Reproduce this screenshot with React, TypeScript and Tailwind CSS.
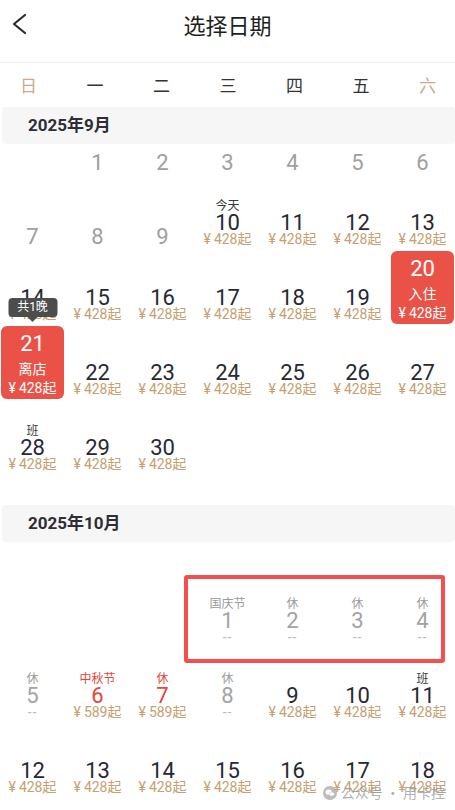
import React from "react";

type Day = {
  d: number;
  label?: string;
  tone?: "dark" | "gray" | "red";
  price?: string;
  past?: boolean;
  dash?: boolean;
  sel?: "in" | "out";
};

const p = (d: number, extra: Partial<Day> = {}): Day => ({ d, price: "428", ...extra });

const septWeeks: (Day | null)[][] = [
  [null, 1, 2, 3, 4, 5, 6].map((d) => (d ? { d, past: true } : null)),
  [
    { d: 7, past: true },
    { d: 8, past: true },
    { d: 9, past: true },
    p(10, { label: "今天", tone: "dark" }),
    p(11),
    p(12),
    p(13),
  ],
  [p(14), p(15), p(16), p(17), p(18), p(19), p(20, { sel: "in" })],
  [p(21, { sel: "out" }), p(22), p(23), p(24), p(25), p(26), p(27)],
  [p(28, { label: "班", tone: "dark" }), p(29), p(30), null, null, null, null],
];

const octWeeks: (Day | null)[][] = [
  [
    null,
    null,
    null,
    { d: 1, label: "国庆节", tone: "gray", dash: true },
    { d: 2, label: "休", tone: "gray", dash: true },
    { d: 3, label: "休", tone: "gray", dash: true },
    { d: 4, label: "休", tone: "gray", dash: true },
  ],
  [
    { d: 5, label: "休", tone: "gray", dash: true },
    { d: 6, label: "中秋节", tone: "red", price: "589" },
    { d: 7, label: "休", tone: "red", price: "589" },
    { d: 8, label: "休", tone: "gray", dash: true },
    p(9),
    p(10),
    p(11, { label: "班", tone: "dark" }),
  ],
  [p(12), p(13), p(14), p(15), p(16), p(17), p(18)],
];

const Price = ({ v, white }: { v: string; white?: boolean }) => (
  <div className={`h-[15px] leading-[15px] text-[14px] whitespace-nowrap ${white ? "text-white" : "text-[#c6a071]"}`}>
    <span className="mr-[3px]">¥</span>
    {v}起
  </div>
);

const Cell = ({ day, short }: { day: Day | null; short?: boolean }) => {
  if (!day) return <div className={short ? "h-[32px]" : "h-[75px]"} />;

  if (day.past) {
    return (
      <div className={`flex flex-col items-center justify-end ${short ? "h-[32px] pb-[2px]" : "h-[75px] pb-[3px]"}`}>
        <div className="h-[22px] leading-[22px] text-[22px] text-[#a0a0a0]">{day.d}</div>
      </div>
    );
  }

  if (day.sel) {
    return (
      <div className="relative h-[75px] px-[1px]">
        {day.sel === "out" && (
          <div className="absolute left-1/2 -translate-x-1/2 -top-[28px] z-10 flex flex-col items-center">
            <div className="h-[19px] w-[49px] rounded-[4px] bg-[#4d4d4d] text-white text-[12px] leading-[19px] text-center">
              共1晚
            </div>
            <div className="w-0 h-0 border-l-[5px] border-r-[5px] border-t-[5px] border-l-transparent border-r-transparent border-t-[#4d4d4d]" />
          </div>
        )}
        <div className="h-[73px] rounded-[6px] bg-[#ea5248] flex flex-col items-center pt-[6px]">
          <div className="h-[24px] leading-[24px] text-[22px] text-white">{day.d}</div>
          <div className="h-[24px] leading-[24px] text-[14px] text-white mt-[1px]">{day.sel === "in" ? "入住" : "离店"}</div>
          <Price v={day.price!} white />
        </div>
      </div>
    );
  }

  const labelColor =
    day.tone === "red" ? "text-[#e5453b]" : day.tone === "gray" ? "text-[#9a9a9a]" : "text-[#3a3a3a]";
  const numColor =
    day.tone === "red" ? "text-[#e5453b]" : day.dash ? "text-[#a3a3a3]" : "text-[#262833]";

  return (
    <div className="h-[75px] flex flex-col items-center justify-end pb-[4px]">
      {day.label && <div className={`h-[14px] leading-[14px] text-[12px] ${labelColor}`}>{day.label}</div>}
      <div className={`h-[19px] leading-[19px] text-[22px] ${numColor}`}>{day.d}</div>
      {day.dash ? (
        <div className="h-[15px] leading-[15px] text-[14px] text-[#bdbdbd] tracking-[1px]">--</div>
      ) : (
        <Price v={day.price!} />
      )}
    </div>
  );
};

const MonthBar = ({ title, className = "" }: { title: string; className?: string }) => (
  <div className={`ml-[2px] h-[37px] rounded-[4px] bg-[#f6f6f6] flex items-center pl-[26px] text-[17px] font-bold text-[#2d2e36] ${className}`}>
    {title}
  </div>
);

export default function App() {
  return (
    <div className="relative w-[455px] h-[810px] overflow-hidden bg-white font-['Roboto','Noto_Sans_CJK_SC',sans-serif]">
      {/* header */}
      <div className="h-[63px] flex items-start border-b border-[#eeeeee]">
        <div className="w-[60px] pt-[12px] pl-[10px]">
          <svg width="16" height="24" viewBox="0 0 16 24" fill="none">
            <path d="M15 3 L4 12 L15 21" stroke="#2a2a2a" strokeWidth="2.2" strokeLinecap="round" strokeLinejoin="round" />
          </svg>
        </div>
        <div className="flex-1 text-center pt-[9px] leading-[30px] text-[22px] text-[#1e1e1e] font-['Noto_Sans_CJK_SC',sans-serif]">
          选择日期
        </div>
        <div className="w-[60px]" />
      </div>

      {/* weekdays */}
      <div className="h-[44px] flex items-center justify-between px-[20px] text-[17px] font-['Noto_Sans_CJK_SC',sans-serif]">
        {["日", "一", "二", "三", "四", "五", "六"].map((w, i) => (
          <div key={w} className={`w-[16px] text-center ${i === 0 || i === 6 ? "text-[#c9ab8b]" : "text-[#333333]"}`}>
            {w}
          </div>
        ))}
      </div>

      {/* September */}
      <MonthBar title="2025年9月" />
      <div className="grid grid-cols-7">
        {septWeeks.map((week, wi) =>
          week.map((day, di) => <Cell key={`s-${wi}-${di}`} day={day} short={wi === 0} />)
        )}
      </div>

      {/* October */}
      <MonthBar title="2025年10月" className="mt-[29px]" />
      <div className="relative pt-[32px] grid grid-cols-7">
        {octWeeks.map((week, wi) =>
          week.map((day, di) => <Cell key={`o-${wi}-${di}`} day={day} />)
        )}
        <div className="absolute left-[184px] top-[33px] w-[261px] h-[88px] border-[4px] border-[#f44e4e] rounded-[3px] pointer-events-none" />
      </div>

      {/* watermark */}
      <div className="absolute right-[10px] bottom-[7px] flex items-center gap-[4px] text-[14px] text-[#9a9a9a]/80 font-['Noto_Sans_CJK_SC',sans-serif]">
        <svg width="14" height="14" viewBox="0 0 16 16" className="opacity-70">
          <circle cx="8" cy="8" r="8" fill="#a0a0a0" />
          <ellipse cx="6.5" cy="7" rx="3.6" ry="2.9" fill="#ffffff" />
          <ellipse cx="10" cy="9.3" rx="3" ry="2.4" fill="#ffffff" stroke="#a0a0a0" strokeWidth="0.6" />
        </svg>
        <span>公众号 · 用卡控</span>
      </div>
    </div>
  );
}
